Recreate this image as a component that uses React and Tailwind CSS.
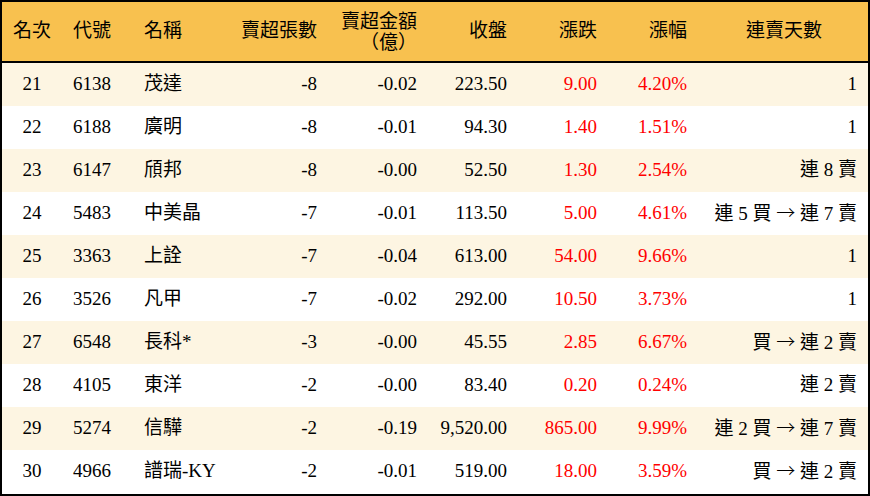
const rows = [
  { rank: 21, code: '6138', name: '茂達', lots: '-8', amount: '-0.02', close: '223.50', change: '9.00', pct: '4.20%', days: '1' },
  { rank: 22, code: '6188', name: '廣明', lots: '-8', amount: '-0.01', close: '94.30', change: '1.40', pct: '1.51%', days: '1' },
  { rank: 23, code: '6147', name: '頎邦', lots: '-8', amount: '-0.00', close: '52.50', change: '1.30', pct: '2.54%', days: '連 8 賣' },
  { rank: 24, code: '5483', name: '中美晶', lots: '-7', amount: '-0.01', close: '113.50', change: '5.00', pct: '4.61%', days: '連 5 買 → 連 7 賣' },
  { rank: 25, code: '3363', name: '上詮', lots: '-7', amount: '-0.04', close: '613.00', change: '54.00', pct: '9.66%', days: '1' },
  { rank: 26, code: '3526', name: '凡甲', lots: '-7', amount: '-0.02', close: '292.00', change: '10.50', pct: '3.73%', days: '1' },
  { rank: 27, code: '6548', name: '長科*', lots: '-3', amount: '-0.00', close: '45.55', change: '2.85', pct: '6.67%', days: '買 → 連 2 賣' },
  { rank: 28, code: '4105', name: '東洋', lots: '-2', amount: '-0.00', close: '83.40', change: '0.20', pct: '0.24%', days: '連 2 賣' },
  { rank: 29, code: '5274', name: '信驊', lots: '-2', amount: '-0.19', close: '9,520.00', change: '865.00', pct: '9.99%', days: '連 2 買 → 連 7 賣' },
  { rank: 30, code: '4966', name: '譜瑞-KY', lots: '-2', amount: '-0.01', close: '519.00', change: '18.00', pct: '3.59%', days: '買 → 連 2 賣' },
]

const cols = 'grid grid-cols-[60px_68px_100px_100px_100px_90px_90px_90px_1fr] items-center'

// the arrow is drawn from the CJK font so it gets its full-width shape
const Days = ({ text }) => {
  const parts = text.split('→')
  return (
    <>
      {parts.map((p, i) => (
        <span key={i}>
          {i > 0 && <span style={{ fontFamily: '"Noto Sans CJK TC", sans-serif' }} className="font-light">→</span>}
          {p}
        </span>
      ))}
    </>
  )
}

const App = () => {
  return (
    <div
      className="w-[870px] h-[496px] border-2 border-black bg-white text-[19px] text-black overflow-hidden"
      style={{ fontFamily: '"Liberation Serif", "Noto Sans CJK TC", serif' }}
    >
      {/* Header */}
      <div className={`${cols} h-[61px] bg-[#f8c14f] border-b-2 border-black`}>
        <div className="text-center">名次</div>
        <div className="pl-[11px]">代號</div>
        <div className="pl-[14px]">名稱</div>
        <div className="text-right pr-[13px]">賣超張數</div>
        <div className="text-right pr-[13px] leading-[21px]">
          賣超金額
          <br />
          （億）
        </div>
        <div className="text-right pr-[13px]">收盤</div>
        <div className="text-right pr-[13px]">漲跌</div>
        <div className="text-right pr-[13px]">漲幅</div>
        <div className="text-center">連賣天數</div>
      </div>

      {/* Rows */}
      {rows.map((r, i) => (
        <div key={r.rank} className={`${cols} h-[43px] ${i % 2 === 0 ? 'bg-[#fdf5e2]' : 'bg-white'}`}>
          <div className="text-center">{r.rank}</div>
          <div className="pl-[11px]">{r.code}</div>
          <div className="pl-[14px]">{r.name}</div>
          <div className="text-right pr-[13px]">{r.lots}</div>
          <div className="text-right pr-[13px]">{r.amount}</div>
          <div className="text-right pr-[13px]">{r.close}</div>
          <div className="text-right pr-[13px] text-[#ff0000]">{r.change}</div>
          <div className="text-right pr-[13px] text-[#ff0000]">{r.pct}</div>
          <div className="text-right pr-[11px] whitespace-pre">
            <Days text={r.days} />
          </div>
        </div>
      ))}
    </div>
  )
}

export default App
